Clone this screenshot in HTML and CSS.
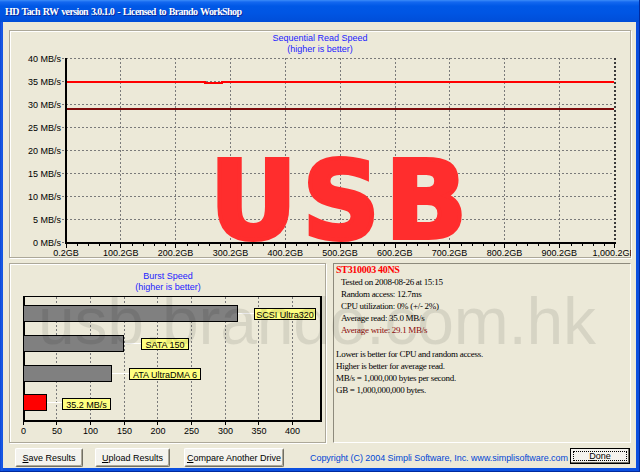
FILE: index.html
```html
<!DOCTYPE html>
<html>
<head>
<meta charset="utf-8">
<title>HD Tach RW</title>
<link rel="stylesheet" href="styles.css">
</head>
<body>
<div class="window">
  <div class="titlebar"><span class="title">HD Tach RW version 3.0.1.0 - Licensed to Brando WorkShop</span></div>
  <div class="client">
    <section class="panel seq">
      <svg class="chart" width="621" height="226" viewBox="0 0 621 226">
        <text class="ttl" x="310" y="9.5">Sequential Read Speed</text>
        <text class="ttl" x="310" y="20.5">(higher is better)</text>
        <path class="grid" d="M52 27.5H604M52 50.5H604M52 73.5H604M52 96.5H604M52 119.5H604M52 142.5H604M52 165.5H604M52 188.5H604M52 211.5H55"/>
        <path class="grid" d="M110.5 27V211M165.5 27V211M220.5 27V211M275.5 27V211M330.5 27V211M385.5 27V211M439.5 27V211M494.5 27V211M549.5 27V211"/>
        <path class="edge" d="M605 27V211"/>
        <rect class="axis" x="55" y="27" width="2" height="186"/>
        <rect class="axis" x="55" y="211" width="551" height="2"/>
        <path class="tick" d="M56.5 213v4M110.5 213v4M165.5 213v4M220.5 213v4M275.5 213v4M330.5 213v4M385.5 213v4M439.5 213v4M494.5 213v4M549.5 213v4M604.5 213v4"/>
        <path class="tick" d="M67.5 213v2M78.5 213v2M89.5 213v2M100.5 213v2M122.5 213v2M133.5 213v2M144.5 213v2M155.5 213v2M177.5 213v2M188.5 213v2M199.5 213v2M210.5 213v2M231.5 213v2M242.5 213v2M253.5 213v2M264.5 213v2M286.5 213v2M297.5 213v2M308.5 213v2M319.5 213v2M341.5 213v2M352.5 213v2M363.5 213v2M374.5 213v2M396.5 213v2M407.5 213v2M418.5 213v2M429.5 213v2M451.5 213v2M462.5 213v2M473.5 213v2M484.5 213v2M506.5 213v2M517.5 213v2M528.5 213v2M539.5 213v2M561.5 213v2M572.5 213v2M583.5 213v2M594.5 213v2"/>
        <g class="ylab">
          <text x="51" y="31">40 MB/s</text>
          <text x="51" y="54">35 MB/s</text>
          <text x="51" y="77">30 MB/s</text>
          <text x="51" y="100">25 MB/s</text>
          <text x="51" y="123">20 MB/s</text>
          <text x="51" y="146">15 MB/s</text>
          <text x="51" y="169">10 MB/s</text>
          <text x="51" y="192">5 MB/s</text>
          <text x="51" y="215">0 MB/s</text>
        </g>
        <g class="xlab">
          <text x="56" y="224.5">0.2GB</text>
          <text x="110.8" y="224.5">100.2GB</text>
          <text x="165.6" y="224.5">200.2GB</text>
          <text x="220.4" y="224.5">300.2GB</text>
          <text x="275.2" y="224.5">400.2GB</text>
          <text x="330" y="224.5">500.2GB</text>
          <text x="384.8" y="224.5">600.2GB</text>
          <text x="439.6" y="224.5">700.2GB</text>
          <text x="494.4" y="224.5">800.2GB</text>
          <text x="549.2" y="224.5">900.2GB</text>
          <text x="604" y="224.5">1,000.2GB</text>
        </g>
        <path class="read" d="M57 51H195V52H212V51H604"/>
        <path class="write" d="M57 78H604"/>
      </svg>
      <div class="usb">USB</div>
    </section>

    <div class="row">
      <section class="panel burst">
        <svg class="chart" width="315" height="176" viewBox="0 0 315 176">
          <text class="ttl" x="158" y="15">Burst Speed</text>
          <text class="ttl" x="158" y="25.5">(higher is better)</text>
          <path class="grid" d="M46.5 33V156M80.5 33V156M114.5 33V156M147.5 33V156M181.5 33V156M215.5 33V156M248.5 33V156M282.5 33V156"/>
          <rect class="axis" x="13" y="32" width="299" height="1"/>
          <rect class="axis" x="310" y="32" width="2" height="126"/>
          <rect class="axis" x="13" y="32" width="2" height="126"/>
          <rect class="axis" x="13" y="156" width="299" height="2"/>
          <path class="tick" d="M13.5 158v3M46.5 158v3M80.5 158v3M114.5 158v3M147.5 158v3M181.5 158v3M215.5 158v3M248.5 158v3M282.5 158v3"/>
          <g class="xlab">
            <text x="13.5" y="170">0</text>
            <text x="47" y="170">50</text>
            <text x="80.5" y="170">100</text>
            <text x="114.5" y="170">150</text>
            <text x="148" y="170">200</text>
            <text x="181.5" y="170">250</text>
            <text x="215.5" y="170">300</text>
            <text x="249" y="170">350</text>
            <text x="282.5" y="170">400</text>
          </g>
          <path class="conn" d="M228 49.5H244M114 79.5H131M102 109.5H119M37 138.5H52"/>
          <rect class="bar" x="13.5" y="41.5" width="214" height="16"/>
          <rect class="bar" x="13.5" y="71.5" width="100" height="16"/>
          <rect class="bar" x="13.5" y="101.5" width="88" height="16"/>
          <rect class="bar mine" x="13.5" y="130.5" width="23" height="16"/>
          <g class="tag">
            <rect x="244.5" y="44.5" width="61" height="11"/>
            <text x="275" y="53.5">SCSI Ultra320</text>
            <rect x="131.5" y="74.5" width="47" height="11"/>
            <text x="155" y="83.5">SATA 150</text>
            <rect x="119.5" y="104.5" width="71" height="11"/>
            <text x="155" y="113.5">ATA UltraDMA 6</text>
            <rect x="52.5" y="134.5" width="48" height="11"/>
            <text x="76.5" y="143.5">35.2 MB/s</text>
          </g>
        </svg>
      </section>

      <section class="info">
        <div class="name">ST310003 40NS</div>
        <div class="ind">Tested on 2008-08-26 at 15:15</div>
        <div class="ind">Random access: 12.7ms</div>
        <div class="ind">CPU utilization: 0% (+/- 2%)</div>
        <div class="ind">Average read: 35.0 MB/s</div>
        <div class="ind write">Average write: 29.1 MB/s</div>
        <div class="blank"></div>
        <div>Lower is better for CPU and random access.</div>
        <div>Higher is better for average read.</div>
        <div>MB/s = 1,000,000 bytes per second.</div>
        <div>GB = 1,000,000,000 bytes.</div>
      </section>
    </div>

    <div class="footer">
      <button class="btn b-save"><u>S</u>ave Results</button>
      <button class="btn b-upload"><u>U</u>pload Results</button>
      <button class="btn b-compare"><u>C</u>ompare Another Drive</button>
      <span class="copy">Copyright (C) 2004 Simpli Software, Inc. www.simplisoftware.com</span>
      <button class="btn done"><span class="focus"><u>D</u>one</span></button>
    </div>

    <div class="watermark">usb.brando.com.hk</div>
  </div>
</div>
</body>
</html>
```

FILE: styles.css
```css
* { box-sizing: border-box; }
html, body { margin: 0; padding: 0; }
body {
  width: 640px;
  height: 472px;
  overflow: hidden;
  font-family: "Liberation Sans", Arial, sans-serif;
  background: #0B4FDF;
}
.window {
  width: 640px;
  height: 472px;
  display: flex;
  flex-direction: column;
  background: linear-gradient(90deg, #0A46D6 0, #1C5CE6 2px, #0B4FDF 3px);
  border-right: 1px solid #002A9E;
  border-bottom: 1px solid #002A9E;
}
.titlebar {
  height: 22px;
  flex: none;
  padding-left: 5px;
  display: flex;
  align-items: center;
  background: linear-gradient(#3C8CF8 0, #1468F0 2px, #0058E6 6px, #0055E3 60%, #004ED8 100%);
}
.title {
  color: #fff;
  font: bold 10px "Liberation Serif", "Times New Roman", serif;
  letter-spacing: -0.6px;
  word-spacing: 1px;
  text-shadow: 1px 1px 0 #0A2A9C;
  padding-top: 1px;
}
.client {
  flex: 1;
  margin: 0 3px 3px 3px;
  background: #ECE9D8;
  position: relative;
  padding: 8px 5px 0 6px;
  display: flex;
  flex-direction: column;
}
.panel {
  position: relative;
  border: 1px solid #ACA899;
  box-shadow: inset 1px 1px 0 #fff, 1px 1px 0 #fff;
}
.seq { height: 228px; flex: none; }
.seq .chart { margin-right: -1px; }
.chart { display: block; }
.chart text {
  font-family: "Liberation Sans", Arial, sans-serif;
  font-size: 9px;
  fill: #000;
}
.chart .ttl { fill: #1C1CFF; text-anchor: middle; }
.chart .ylab text { text-anchor: end; }
.chart .xlab text { text-anchor: middle; }
.grid { stroke: #7A7A7A; stroke-width: 1; stroke-dasharray: 2 2; fill: none; }
.edge { stroke: #3A3A3A; stroke-width: 2; stroke-dasharray: 2 2; fill: none; }
.axis { fill: #000; }
.tick { stroke: #000; stroke-width: 1; fill: none; }
.read { stroke: #FF0000; stroke-width: 2; fill: none; }
.write { stroke: #7E0B0B; stroke-width: 2; fill: none; }
.conn { stroke: #FFFFFF; stroke-width: 1; fill: none; }
.bar { fill: #808080; stroke: #000; stroke-width: 1; }
.bar.mine { fill: #FF0000; }
.tag rect { fill: #FFFF80; stroke: #000; stroke-width: 1; }
.tag text { text-anchor: middle; }

.usb {
  position: absolute;
  left: 56px;
  top: 127px;
  width: 550px;
  text-align: center;
  font: bold 108px/0.8 "DejaVu Sans", "Liberation Sans", sans-serif;
  color: #FF2D2D;
  -webkit-text-stroke: 4px #FF2D2D;
  letter-spacing: 5px;
}

.row {
  display: flex;
  gap: 7px;
  margin-top: 5px;
  height: 180px;
  flex: none;
}
.burst { width: 317px; flex: none; }
.info {
  flex: 1;
  border: 1px solid;
  border-color: #8D8A7C #FFFFFF #FFFFFF #8D8A7C;
  padding: 0 0 0 2px;
  font: 9px/12px "Liberation Serif", "Times New Roman", serif;
  letter-spacing: -0.3px;
  color: #000;
}
.info .name { color: #FF0000; font-weight: bold; font-size: 10px; letter-spacing: -0.3px; }
.info .ind { padding-left: 5px; }
.info .write { color: #8B0A0A; }
.info .blank { height: 12px; }

.footer {
  display: flex;
  align-items: flex-start;
  margin-top: 5px;
  padding-left: 6px;
  height: 20px;
  flex: none;
}
.btn {
  height: 19px;
  padding: 0;
  font: 9px "Liberation Sans", Arial, sans-serif;
  color: #000;
  background: #F4F3EE;
  border: 1px solid;
  border-color: #FFFFFF #716F64 #716F64 #FFFFFF;
  box-shadow: inset -1px -1px 0 #ACA899;
  border-radius: 2px;
}
.b-save { width: 68px; margin-right: 12px; }
.b-upload { width: 75px; margin-right: 14px; }
.b-compare { width: 100px; }
.copy {
  margin-left: 26px;
  line-height: 20px;
  font-size: 9px;
  letter-spacing: -0.05px;
  color: #0046D5;
  white-space: nowrap;
}
.done {
  margin-left: auto;
  margin-right: 1px;
  width: 60px;
  height: 16px;
  border: 1px solid #000;
  box-shadow: inset -1px -1px 0 #716F64;
  border-radius: 0;
  padding: 2px;
  background: #F4F3EE;
}
.done .focus {
  display: block;
  height: 100%;
  border: 1px dotted #000;
  line-height: 9px;
}

.watermark {
  position: absolute;
  left: 35px;
  top: 266px;
  font: 66px/1 "Liberation Sans", Arial, sans-serif;
  letter-spacing: -0.2px;
  color: rgba(0, 0, 0, 0.09);
  white-space: nowrap;
  pointer-events: none;
}
```
